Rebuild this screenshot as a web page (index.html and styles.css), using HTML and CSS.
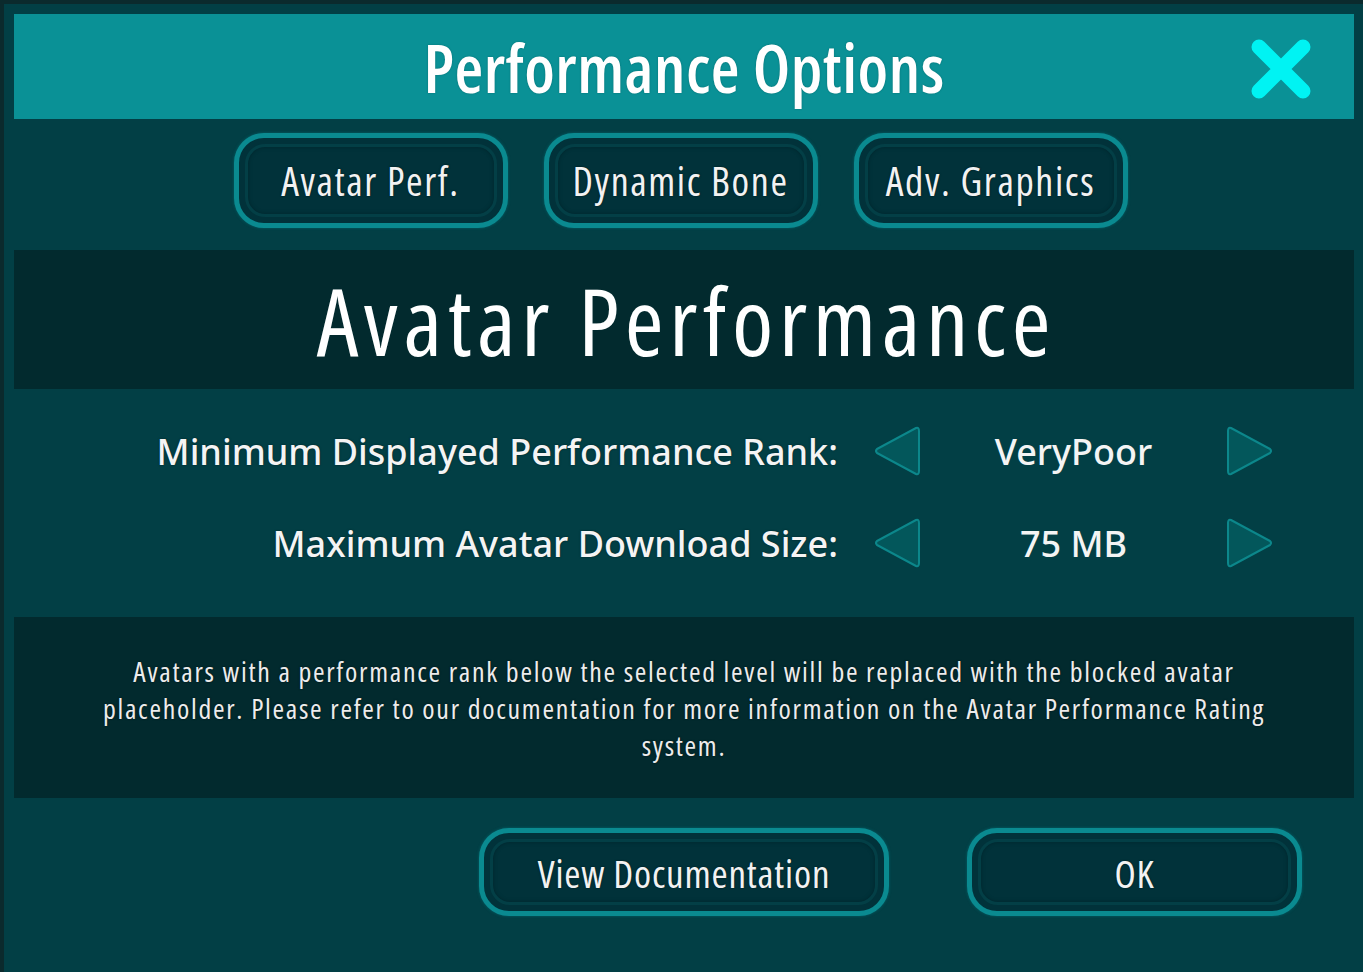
FILE: index.html
```html
<!DOCTYPE html>
<html lang="en">
<head>
<meta charset="utf-8">
<title>Performance Options</title>
<link rel="stylesheet" href="styles.css">
</head>
<body>
<div class="panel">
  <header class="titlebar">
    <h1 class="title">Performance Options</h1>
    <button class="close" aria-label="Close">
      <svg width="62" height="62" viewBox="0 0 62 62"><path d="M9 9 L53 53 M53 9 L9 53" stroke="#00f3f3" stroke-width="15" stroke-linecap="round" fill="none"/></svg>
    </button>
  </header>

  <nav class="tabs">
    <button class="btn tab"><span class="btn-inner">Avatar Perf.</span></button>
    <button class="btn tab"><span class="btn-inner">Dynamic Bone</span></button>
    <button class="btn tab"><span class="btn-inner">Adv. Graphics</span></button>
  </nav>

  <section class="band">
    <h2 class="band-title">Avatar Performance</h2>
  </section>

  <section class="settings">
    <div class="row">
      <span class="label">Minimum Displayed Performance Rank:</span>
      <button class="arrow" aria-label="Previous"><svg width="50" height="54" viewBox="0 0 50 54"><path d="M44 4 Q47 3 47 7 L47 47 Q47 51 44 50 L5 29 Q3 27 5 25 Z" fill="#03575b" stroke="#0c878b" stroke-width="2" stroke-linejoin="round"/></svg></button>
      <span class="value">VeryPoor</span>
      <button class="arrow" aria-label="Next"><svg width="50" height="54" viewBox="0 0 50 54"><path d="M6 4 Q3 3 3 7 L3 47 Q3 51 6 50 L45 29 Q47 27 45 25 Z" fill="#03575b" stroke="#0c878b" stroke-width="2" stroke-linejoin="round"/></svg></button>
    </div>
    <div class="row">
      <span class="label">Maximum Avatar Download Size:</span>
      <button class="arrow" aria-label="Previous"><svg width="50" height="54" viewBox="0 0 50 54"><path d="M44 4 Q47 3 47 7 L47 47 Q47 51 44 50 L5 29 Q3 27 5 25 Z" fill="#03575b" stroke="#0c878b" stroke-width="2" stroke-linejoin="round"/></svg></button>
      <span class="value">75 MB</span>
      <button class="arrow" aria-label="Next"><svg width="50" height="54" viewBox="0 0 50 54"><path d="M6 4 Q3 3 3 7 L3 47 Q3 51 6 50 L45 29 Q47 27 45 25 Z" fill="#03575b" stroke="#0c878b" stroke-width="2" stroke-linejoin="round"/></svg></button>
    </div>
  </section>

  <section class="info">
    <p class="info-text">Avatars with a performance rank below the selected level will be replaced with the blocked avatar placeholder. Please refer to our documentation for more information on the Avatar Performance Rating system.</p>
  </section>

  <footer class="actions">
    <button class="btn action doc"><span class="btn-inner">View Documentation</span></button>
    <button class="btn action ok"><span class="btn-inner">OK</span></button>
  </footer>
</div>
</body>
</html>
```

FILE: styles.css
```css
* { box-sizing: border-box; }

html, body {
  margin: 0;
  height: 100%;
  background: #0b2a2d;
  overflow: hidden;
}

body {
  padding: 4px 0 0 4px;
  font-family: "Open Sans", "Noto Sans", sans-serif;
  font-stretch: 75%;
  color: #f2f2f2;
}

.panel {
  height: 968px;
  background: #023f45;
  padding: 10px 9px 0 10px;
  display: flex;
  flex-direction: column;
}

.titlebar {
  height: 105px;
  background: #0a9196;
  display: flex;
  align-items: center;
  justify-content: center;
  position: relative;
}

.title {
  margin: 0;
  font-size: 66px;
  font-weight: 600;
  letter-spacing: 0.5px;
  color: #ffffff;
  text-shadow: 0 0 2px rgba(0,0,0,0.25);
}

.close {
  position: absolute;
  right: 42px;
  top: 24px;
  width: 62px;
  height: 62px;
  padding: 0;
  border: 0;
  background: none;
}
.close svg { display: block; }

.tabs {
  display: flex;
  justify-content: center;
  gap: 36px;
  margin: 14px 0 22px;
  padding-right: 7px;
}

.btn {
  display: flex;
  padding: 6px;
  border: 5px solid #0a8a90;
  border-radius: 30px;
  background: #01323a;
  font-family: inherit;
  font-stretch: 75%;
  color: #f2f2f2;
  box-shadow: 0 0 3px rgba(10,138,144,0.5);
}

.btn-inner {
  flex: 1;
  display: flex;
  align-items: center;
  justify-content: center;
  border: 3px solid #033f46;
  border-radius: 20px;
  box-shadow: inset 0 0 4px rgba(0,0,0,0.25);
  text-shadow: 0 0 2px rgba(0,0,0,0.6);
}

.tab {
  width: 274px;
  height: 95px;
  font-size: 40px;
  letter-spacing: 1.6px;
}

.band {
  height: 139px;
  background: #022a2e;
  display: flex;
  align-items: center;
  justify-content: center;
}

.band-title {
  margin: 0;
  font-size: 94px;
  font-weight: 400;
  letter-spacing: 5.6px;
  padding-left: 5px;
  color: #ffffff;
}

.settings {
  padding: 16px 80px 28px 0;
}

.row {
  display: grid;
  grid-template-columns: 1fr 48px 305px 48px;
  align-items: center;
  height: 92px;
}

.label {
  justify-self: end;
  margin-right: 35px;
  font-family: "Noto Sans", sans-serif;
  font-stretch: 100%;
  font-weight: 500;
  font-size: 36px;
  color: #f4f4f4;
  text-shadow: 0 0 2px rgba(0,0,0,0.5);
}

.value {
  text-align: center;
  font-family: "Noto Sans", sans-serif;
  font-stretch: 100%;
  font-weight: 500;
  font-size: 36px;
  color: #f4f4f4;
}

.arrow {
  width: 50px;
  height: 54px;
  padding: 0;
  border: 0;
  background: none;
  margin-left: -1px;
}
.arrow svg { display: block; }

.info {
  height: 181px;
  background: #022a2e;
  display: flex;
  align-items: flex-start;
  justify-content: center;
  padding: 36px 70px 0;
}

.info-text {
  margin: 0;
  text-align: center;
  font-size: 28px;
  line-height: 37px;
  letter-spacing: 1.7px;
  color: #ececec;
  text-shadow: 0 0 2px rgba(0,0,0,0.7);
}

.actions {
  display: flex;
  justify-content: flex-end;
  gap: 78px;
  margin-top: 30px;
  padding-right: 52px;
}

.action {
  height: 88px;
  font-size: 39px;
  letter-spacing: 0.8px;
}
.doc { width: 410px; }
.ok { width: 335px; }
```
